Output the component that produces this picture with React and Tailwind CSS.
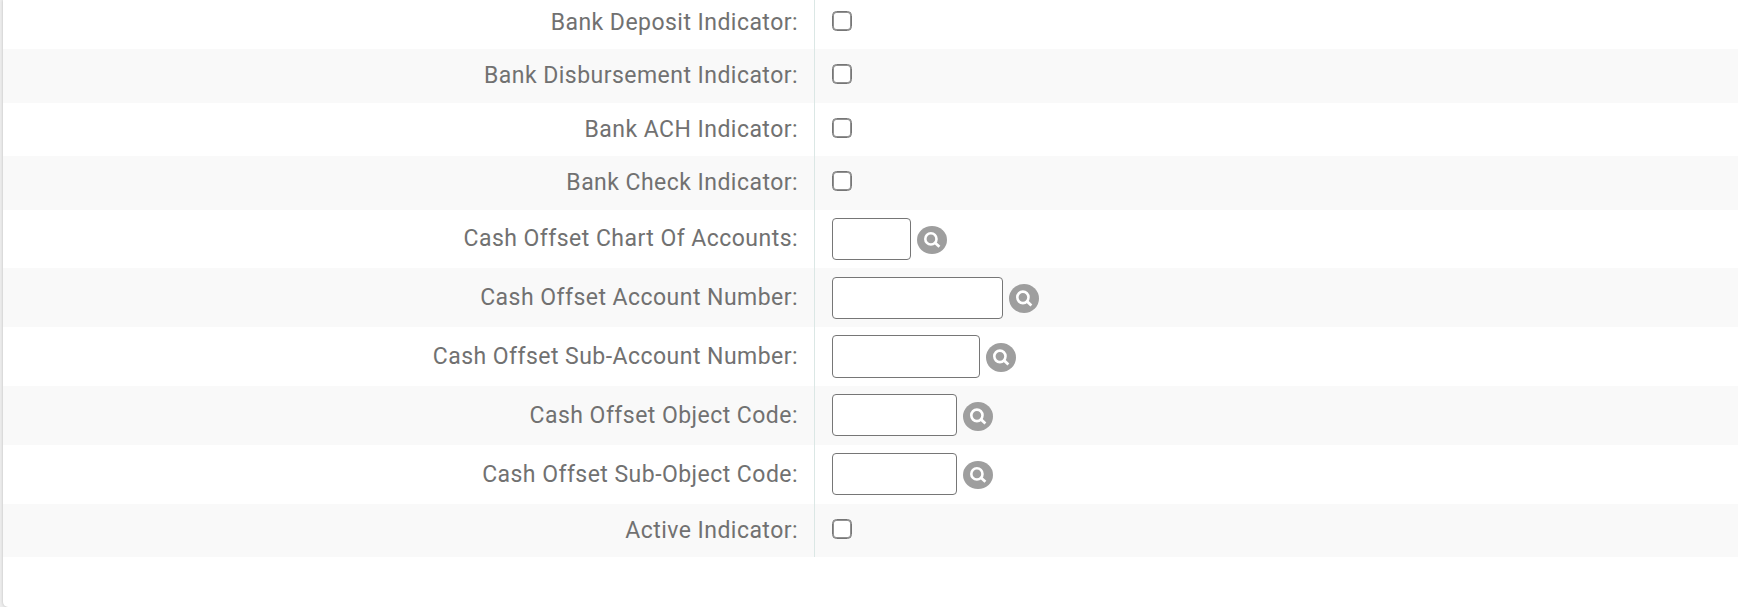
const rows = [
  { label: 'Bank Deposit Indicator:', row: 'h-[49px]', text: 'pt-[8px]', field: 'pt-[11px]' },
  { label: 'Bank Disbursement Indicator:', row: 'h-[54px] bg-[#f9f9f9]', text: 'pt-[12px]', field: 'pt-[15px]' },
  { label: 'Bank ACH Indicator:', row: 'h-[53px]', text: 'pt-[12px]', field: 'pt-[15px]' },
  { label: 'Bank Check Indicator:', row: 'h-[54px] bg-[#f9f9f9]', text: 'pt-[12px]', field: 'pt-[15px]' },
  { label: 'Cash Offset Chart Of Accounts:', row: 'h-[58px]', text: 'pt-[14px]', field: 'pt-[8px]', input: 'w-[79px] h-[42px]', icon: 'mt-[8px] h-[28px]' },
  { label: 'Cash Offset Account Number:', row: 'h-[59px] bg-[#f9f9f9]', text: 'pt-[15px]', field: 'pt-[9px]', input: 'w-[171px] h-[42px]', icon: 'mt-[7px] h-[29px]' },
  { label: 'Cash Offset Sub-Account Number:', row: 'h-[59px]', text: 'pt-[15px]', field: 'pt-[8px]', input: 'w-[148px] h-[43px]', icon: 'mt-[8px] h-[29px]' },
  { label: 'Cash Offset Object Code:', row: 'h-[59px] bg-[#f9f9f9]', text: 'pt-[15px]', field: 'pt-[8px]', input: 'w-[125px] h-[42px]', icon: 'mt-[8px] h-[29px]' },
  { label: 'Cash Offset Sub-Object Code:', row: 'h-[59px]', text: 'pt-[15px]', field: 'pt-[8px]', input: 'w-[125px] h-[42px]', icon: 'mt-[8px] h-[28px]' },
  { label: 'Active Indicator:', row: 'h-[53px] bg-[#f9f9f9]', text: 'pt-[12px]', field: 'pt-[15px]' },
];

function LookupIcon({ className }) {
  return (
    <svg className={className} viewBox="0 0 30 28" preserveAspectRatio="none" fill="none">
      <ellipse cx="15" cy="14" rx="15" ry="14" fill="#9e9e9e" />
      <circle cx="13.9" cy="12.9" r="5.6" stroke="#fff" strokeWidth="2.6" />
      <path d="M18 16.8L22.4 20.8" stroke="#fff" strokeWidth="2.8" />
    </svg>
  );
}

export default function App() {
  return (
    <div className="h-[607px] w-full overflow-hidden bg-[#ededed] pl-[3px] font-['Roboto',sans-serif]">
      <div className="h-[607px] rounded-bl-[5px] bg-white shadow-[0_0_3px_rgba(0,0,0,0.22)]">
        {rows.map((r) => (
          <div key={r.label} className={`flex ${r.row}`}>
            <label className={`w-[812px] shrink-0 border-r border-[#dbe7e5] pr-[16px] text-right text-[23px] leading-[30px] tracking-[0.46px] text-[#717171] ${r.text}`}>
              {r.label}
            </label>
            <div className={`flex items-start pl-[17px] ${r.field}`}>
              {r.input ? (
                <>
                  <input type="text" aria-label={r.label} className={`rounded-[4px] border border-[#767676] bg-white px-2 ${r.input}`} />
                  <button type="button" className="ml-[6px] flex">
                    <LookupIcon className={`w-[30px] ${r.icon}`} />
                  </button>
                </>
              ) : (
                <input type="checkbox" aria-label={r.label} className="size-[20px] appearance-none rounded-[4.5px] border border-[#767676] bg-white shadow-[inset_0_0_0_1px_rgba(118,118,118,0.8)]" />
              )}
            </div>
          </div>
        ))}
      </div>
    </div>
  );
}
